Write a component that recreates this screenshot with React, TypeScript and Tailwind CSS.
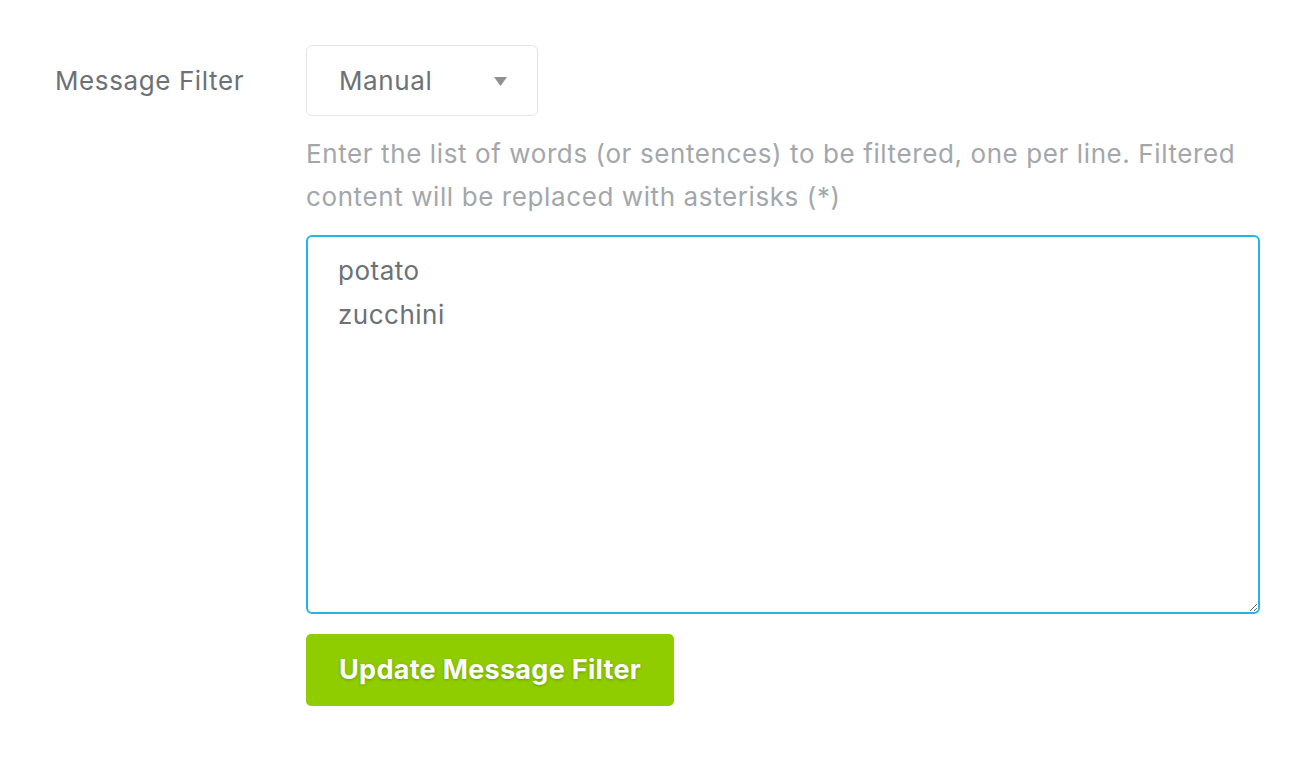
export default function App() {
  return (
    <div className="min-h-[758px] w-[1312px] bg-white font-['Inter',sans-serif]">
      <div className="flex pt-[45px] pl-[55px]">
        <div className="w-[251px] shrink-0">
          <div className="h-[71px] flex items-center text-[26px] text-[#6b7176] tracking-[0.6px]">
            Message Filter
          </div>
        </div>
        <div className="w-[954px]">
          <div className="relative w-[232px] h-[71px] border border-[#e3e6e8] rounded-[6px] flex items-center pl-[32px] text-[26px] text-[#6b7176] tracking-[0.6px]">
            Manual
            <svg className="absolute left-[187px] top-[31px]" width="13" height="9" viewBox="0 0 13 9">
              <path d="M0 0 L13 0 L6.5 9 Z" fill="#8b9196" />
            </svg>
          </div>
          <p className="mt-[16px] text-[26px] leading-[43px] text-[#a3a7ab] tracking-[0.6px]">
            Enter the list of words (or sentences) to be filtered, one per line. Filtered content will be replaced with asterisks (*)
          </p>
          <textarea
            className="mt-[17px] block w-[954px] h-[379px] border-2 border-[#22b6e3] rounded-[6px] px-[30px] pt-[12px] text-[26px] leading-[44px] text-[#6b7176] tracking-[0.5px] outline-none resize-y"
            defaultValue={'potato\nzucchini'}
          />
          <button className="mt-[20px] h-[72px] px-[33px] rounded-[5px] bg-[#8fcd00] text-white font-bold text-[27px] tracking-[0.3px] [text-shadow:0_1px_3px_rgba(0,0,0,0.25)]">
            Update Message Filter
          </button>
        </div>
      </div>
    </div>
  );
}
